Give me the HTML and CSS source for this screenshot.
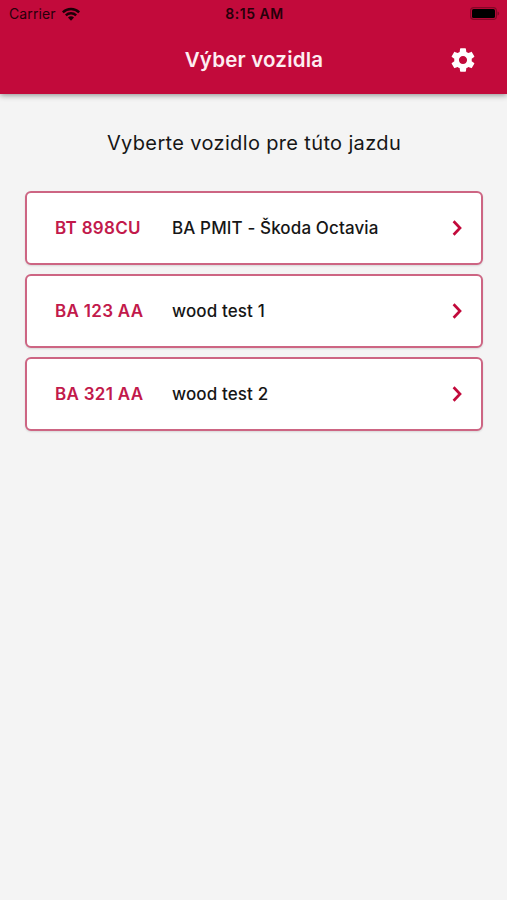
FILE: index.html
```html
<!DOCTYPE html>
<html lang="sk">
<head>
    <meta charset="UTF-8">
    <meta name="viewport" content="width=device-width, initial-scale=1.0">
    <title>Výber vozidla</title>
    <link rel="stylesheet" href="styles.css">
</head>
<body>
    <header class="header">
        <div class="status-bar">
            <div class="carrier">
                <span>Carrier</span>
                <svg class="wifi" viewBox="0 0 18 14">
                    <path d="M0 4.4a12.7 12.7 0 0 1 18 0l-1.7 1.8a10.3 10.3 0 0 0-14.6 0z"/>
                    <path d="M3 7.5a8.5 8.5 0 0 1 12 0l-1.7 1.7a6.1 6.1 0 0 0-8.6 0z"/>
                    <path d="M6 10.6a4.2 4.2 0 0 1 6 0L9 13.8z"/>
                </svg>
            </div>
            <span class="time">8:15 AM</span>
            <svg class="battery" viewBox="0 0 30 13">
                <rect class="battery-case" x="0.6" y="0.6" width="25.8" height="11.8" rx="3.2"/>
                <rect x="2" y="2" width="23" height="9" rx="1.6"/>
                <path class="battery-cap" d="M27.5 4.5c2.2.8 2.2 3.2 0 4z"/>
            </svg>
        </div>
        <div class="title-bar">
            <h1>Výber vozidla</h1>
            <button class="settings" aria-label="Nastavenia">
                <svg viewBox="0 0 24 24">
                    <path d="M19.43 12.98c.04-.32.07-.64.07-.98s-.03-.66-.07-.98l2.11-1.65c.19-.15.24-.42.12-.64l-2-3.46c-.12-.22-.39-.3-.61-.22l-2.49 1c-.52-.4-1.08-.73-1.69-.98l-.38-2.65A.488.488 0 0 0 14 2h-4c-.25 0-.46.18-.49.42l-.38 2.65c-.61.25-1.17.59-1.69.98l-2.49-1c-.23-.09-.49 0-.61.22l-2 3.46c-.13.22-.07.49.12.64l2.11 1.65c-.04.32-.07.65-.07.98s.03.66.07.98l-2.11 1.65c-.19.15-.24.42-.12.64l2 3.46c.12.22.39.3.61.22l2.49-1c.52.4 1.08.73 1.69.98l.38 2.65c.03.24.24.42.49.42h4c.25 0 .46-.18.49-.42l.38-2.65c.61-.25 1.17-.59 1.69-.98l2.49 1c.23.09.49 0 .61-.22l2-3.46c.12-.22.07-.49-.12-.64l-2.11-1.65zM12 15.5c-1.93 0-3.5-1.57-3.5-3.5s1.57-3.5 3.5-3.5 3.5 1.57 3.5 3.5-1.57 3.5-3.5 3.5z"/>
                </svg>
            </button>
        </div>
    </header>

    <main class="content">
        <p class="intro">Vyberte vozidlo pre túto jazdu</p>
        <div class="vehicles">
            <a class="vehicle" href="#">
                <span class="plate">BT 898CU</span>
                <span class="name">BA PMIT - Škoda Octavia</span>
                <svg class="chevron" viewBox="0 0 12 18"><path d="M1.6 2.3L8 9l-6.4 6.7"/></svg>
            </a>
            <a class="vehicle" href="#">
                <span class="plate">BA 123 AA</span>
                <span class="name">wood test 1</span>
                <svg class="chevron" viewBox="0 0 12 18"><path d="M1.6 2.3L8 9l-6.4 6.7"/></svg>
            </a>
            <a class="vehicle" href="#">
                <span class="plate">BA 321 AA</span>
                <span class="name">wood test 2</span>
                <svg class="chevron" viewBox="0 0 12 18"><path d="M1.6 2.3L8 9l-6.4 6.7"/></svg>
            </a>
        </div>
    </main>
</body>
</html>
```
FILE: styles.css
```css
* { margin: 0; padding: 0; box-sizing: border-box; font-family: Inter, sans-serif; }

body {
    min-height: 100vh;
    background: #f4f4f4;
    color: #161616;
}

/* Header */
.header {
    height: 94px;
    background: #c20a3b;
    box-shadow: 0 1px 6px rgba(0, 0, 0, 0.45);
}

.status-bar {
    display: grid;
    grid-template-columns: 1fr auto 1fr;
    align-items: center;
    height: 27px;
    padding: 0 7px 0 9px;
    color: #26000a;
    font-size: 14px;
}

.carrier {
    display: flex;
    align-items: center;
    gap: 6px;
    letter-spacing: 0.1px;
}

.wifi {
    width: 18px;
    height: 14px;
    fill: #1c0007;
}

.time {
    font-size: 14px;
    font-weight: 600;
    letter-spacing: 0.5px;
}

.battery {
    justify-self: end;
    width: 30px;
    height: 13px;
}

.battery-case {
    fill: none;
    stroke: #850727;
    stroke-width: 1.2;
}

.battery-cap { fill: #850727; }

.title-bar {
    display: grid;
    grid-template-columns: 1fr auto 1fr;
    align-items: center;
    height: 65px;
    padding: 0 30px 0 31px;
}

.title-bar h1 {
    grid-column: 2;
    color: #fdeef2;
    font-size: 20.5px;
    font-weight: 600;
    letter-spacing: 0.2px;
}

.settings {
    justify-self: end;
    width: 28px;
    height: 28px;
    border: none;
    background: none;
    cursor: pointer;
}

.settings svg {
    display: block;
    fill: #fff;
}

/* Vehicle list */
.content { padding: 36px 24px 0 25px; }

.intro {
    margin-bottom: 35px;
    font-size: 20px;
    line-height: 26px;
    letter-spacing: 0.35px;
    text-align: center;
}

.vehicles {
    display: flex;
    flex-direction: column;
    gap: 9px;
}

.vehicle {
    display: flex;
    align-items: center;
    height: 74px;
    padding: 0 17px 0 28px;
    border: 2px solid #cd6583;
    border-radius: 6px;
    background: #fff;
    box-shadow: 0 1px 2px rgba(0, 0, 0, 0.12);
    color: #161616;
    font-size: 17px;
    font-weight: 500;
    letter-spacing: 0.12px;
    text-decoration: none;
}

.plate {
    width: 117px;
    color: #c2194b;
    font-weight: 600;
    letter-spacing: 0.3px;
}

.name { flex: 1; }

.chevron {
    width: 12px;
    height: 18px;
    fill: none;
    stroke: #c20a3b;
    stroke-width: 2.7;
}
```
